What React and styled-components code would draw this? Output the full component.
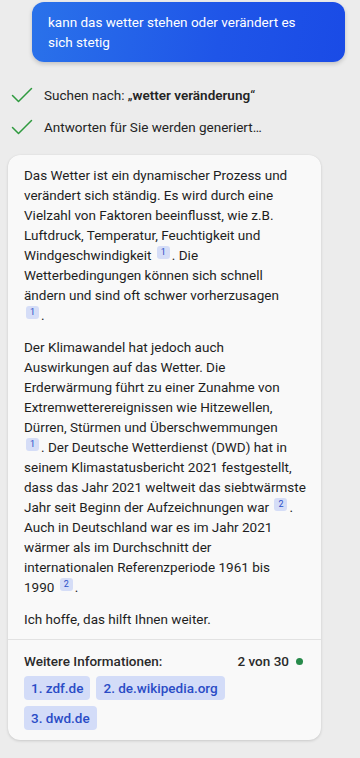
import React from 'react';
import styled, { createGlobalStyle } from 'styled-components';

const GlobalStyle = createGlobalStyle`
  html, body {
    margin: 0;
    padding: 0;
    background: #ececec;
  }
  body {
    font-family: Roboto, 'Noto Sans', sans-serif;
    color: #1b1b1b;
  }
`;

const sources = ['zdf.de', 'de.wikipedia.org', 'dwd.de'];

// citation badge glued to the punctuation that follows it
const Cite = ({ n, after = '.' }) => (
  <Glue>
    <Badge>{n}</Badge>
    {after}
  </Glue>
);

const Check = () => (
  <svg width="22" height="16" viewBox="0 0 22 16" fill="none">
    <path d="M1.5 8.5 L7.5 14.5 L20.5 1.5" stroke="#2f9a3f" strokeWidth="1.5" strokeLinecap="round" strokeLinejoin="round" />
  </svg>
);

const App = () => {
  return (
    <Page>
      <GlobalStyle />
      <UserRow>
        <UserBubble>
          kann das wetter stehen oder verändert es
          <br />
          sich stetig
        </UserBubble>
      </UserRow>
      <Steps>
        <Step>
          <Check />
          <span>
            Suchen nach: „<b>wetter veränderung</b>“
          </span>
        </Step>
        <Step>
          <Check />
          <span>Antworten für Sie werden generiert…</span>
        </Step>
      </Steps>
      <Card>
        <Body>
          <Para>
            Das Wetter ist ein dynamischer Prozess und<br />
            verändert sich ständig. Es wird durch eine<br />
            Vielzahl von Faktoren beeinflusst, wie z.B.<br />
            Luftdruck, Temperatur, Feuchtigkeit und<br />
            Windgeschwindigkeit <Cite n={1} /> Die<br />
            Wetterbedingungen können sich schnell<br />
            ändern und sind oft schwer vorherzusagen<br />
            <Cite n={1} />
          </Para>
          <Para>
            Der Klimawandel hat jedoch auch<br />
            Auswirkungen auf das Wetter. Die<br />
            Erderwärmung führt zu einer Zunahme von<br />
            Extremwetterereignissen wie Hitzewellen,<br />
            Dürren, Stürmen und Überschwemmungen<br />
            <Cite n={1} /> Der Deutsche Wetterdienst (DWD) hat in<br />
            seinem Klimastatusbericht 2021 festgestellt,<br />
            dass das Jahr 2021 weltweit das siebtwärmste<br />
            Jahr seit Beginn der Aufzeichnungen war <Cite n={2} />
            <br />
            Auch in Deutschland war es im Jahr 2021<br />
            wärmer als im Durchschnitt der<br />
            internationalen Referenzperiode 1961 bis<br />
            1990 <Cite n={2} />
          </Para>
          <Para>Ich hoffe, das hilft Ihnen weiter.</Para>
        </Body>
        <Footer>
          <FooterHead>
            <span>Weitere Informationen:</span>
            <Count>
              2 von 30 <Dot />
            </Count>
          </FooterHead>
          <Chips>
            {sources.map((s, i) => (
              <Chip key={s}>
                {i + 1}. {s}
              </Chip>
            ))}
          </Chips>
        </Footer>
      </Card>
    </Page>
  );
};

const Page = styled.div`
  width: 360px;
  height: 758px;
  padding: 2px 8px 0 8px;
  box-sizing: border-box;
  overflow: hidden;
`;

const UserRow = styled.div`
  display: flex;
  justify-content: flex-end;
  padding-right: 7px;
`;

const UserBubble = styled.div`
  width: 313px;
  box-sizing: border-box;
  padding: 10px 16px 10px 16px;
  border-radius: 12px;
  background: linear-gradient(100deg, #2a72ea 0%, #1f55e8 60%, #1a4be6 100%);
  color: #fff;
  font-size: 13.5px;
  line-height: 20px;
  box-shadow: 0 2px 4px rgba(0, 0, 0, 0.18);
`;

const Steps = styled.div`
  display: flex;
  flex-direction: column;
  gap: 12px;
  margin-top: 23px;
  padding-left: 3px;
`;

const Step = styled.div`
  display: flex;
  align-items: center;
  gap: 11px;
  height: 20px;
  font-size: 13.5px;
  color: #242424;

  b {
    font-weight: 600;
  }
`;

const Card = styled.div`
  margin-top: 18px;
  width: 313px;
  background: #f9f9f9;
  border-radius: 12px;
  box-shadow: 0 1px 3px rgba(0, 0, 0, 0.14), 0 0 1px rgba(0, 0, 0, 0.08);
  overflow: hidden;
`;

const Body = styled.div`
  padding: 10px 8px 10px 16px;
  font-size: 13.5px;
  line-height: 20px;
  color: #1e1e1e;
  white-space: nowrap;
`;

const Para = styled.p`
  margin: 0 0 12px 0;

  &:last-child {
    margin-bottom: 0;
  }
`;

const Glue = styled.span`
  white-space: nowrap;
`;

const Badge = styled.span`
  display: inline-flex;
  align-items: center;
  justify-content: center;
  width: 13px;
  height: 13px;
  border-radius: 3px;
  background: #d5ddf7;
  color: #2c4fc8;
  font-size: 9px;
  line-height: 1;
  vertical-align: 5px;
  margin: 0 2px 0 2px;
`;

const Footer = styled.div`
  border-top: 1px solid #e2e2e2;
  padding: 11px 16px 10px 16px;
`;

const FooterHead = styled.div`
  display: flex;
  justify-content: space-between;
  align-items: center;
  font-size: 13.5px;
  line-height: 20px;
  color: #2a2a2a;
  font-weight: 500;
  padding-right: 2px;
`;

const Count = styled.span`
  display: flex;
  align-items: center;
  gap: 7px;
`;

const Dot = styled.span`
  width: 7px;
  height: 7px;
  border-radius: 50%;
  background: #278a4a;
`;

const Chips = styled.div`
  display: flex;
  flex-wrap: wrap;
  gap: 6px;
  margin-top: 5px;
  width: 240px;
`;

const Chip = styled.span`
  display: inline-flex;
  align-items: center;
  height: 24px;
  padding: 0 7px;
  border-radius: 4px;
  background: #d3dcf8;
  color: #2a4cc6;
  font-size: 13.5px;
  font-weight: 500;
`;

export default App;
